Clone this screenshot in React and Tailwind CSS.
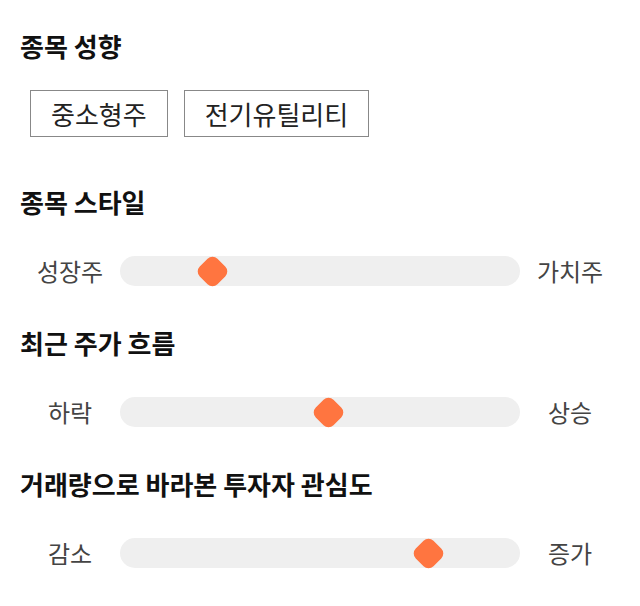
const font = { fontFamily: '"Noto Sans CJK KR", "Noto Sans", sans-serif' };

const tags = ['중소형주', '전기유틸리티'];

const sliders = [
  { title: '종목 스타일', left: '성장주', right: '가치주', value: 0.23 },
  { title: '최근 주가 흐름', left: '하락', right: '상승', value: 0.52 },
  { title: '거래량으로 바라본 투자자 관심도', left: '감소', right: '증가', value: 0.77 },
];

function Heading({ children }) {
  return <h2 className="h-8 leading-8 text-[26px] font-bold text-[#111]">{children}</h2>;
}

function Slider({ left, right, value }) {
  return (
    <div className="flex items-center mt-[38px]">
      <span className="w-[100px] text-center text-[24px] leading-[30px] text-[#444]">{left}</span>
      <div className="relative w-[400px] h-[30px] rounded-full bg-[#efefef]">
        <div
          className="absolute top-[2.5px] w-[25px] h-[25px] -ml-[12.5px] rotate-45 rounded-[7px] bg-[#ff7540]"
          style={{ left: `${value * 100}%` }}
        />
      </div>
      <span className="w-[100px] text-center text-[24px] leading-[30px] text-[#444]">{right}</span>
    </div>
  );
}

export default function App() {
  return (
    <div className="w-[640px] h-[606px] bg-white px-5 pt-[30px]" style={font}>
      <Heading>종목 성향</Heading>
      <div className="flex gap-4 mt-7 pl-[10px]">
        {tags.map(t => (
          <div key={t} className="h-[47px] px-5 flex items-center border border-[#888] text-[26px] text-[#222]">
            {t}
          </div>
        ))}
      </div>
      {sliders.map((s, i) => (
        <div key={s.title} className={i === 0 ? 'mt-[49px]' : 'mt-[41px]'}>
          <Heading>{s.title}</Heading>
          <Slider left={s.left} right={s.right} value={s.value} />
        </div>
      ))}
    </div>
  );
}
